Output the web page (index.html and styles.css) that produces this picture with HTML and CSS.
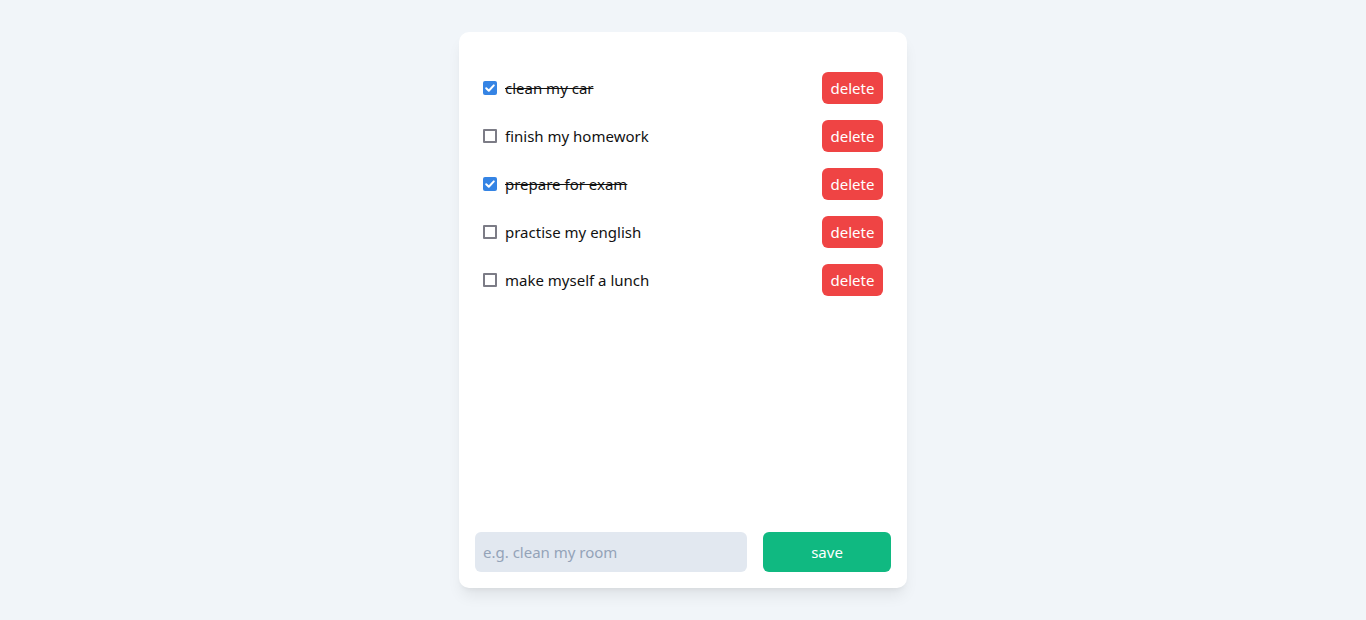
FILE: index.html
```html
<!DOCTYPE html>
<html>
<head>
<meta charset="utf-8">
<link rel="stylesheet" href="styles.css">
</head>
<body>
<div class="card">
  <ul class="list">
    <li class="item">
      <label class="label"><input type="checkbox" class="check" checked><span class="text done">clean my car</span></label>
      <button class="delete">delete</button>
    </li>
    <li class="item">
      <label class="label"><input type="checkbox" class="check"><span class="text">finish my homework</span></label>
      <button class="delete">delete</button>
    </li>
    <li class="item">
      <label class="label"><input type="checkbox" class="check" checked><span class="text done">prepare for exam</span></label>
      <button class="delete">delete</button>
    </li>
    <li class="item">
      <label class="label"><input type="checkbox" class="check"><span class="text">practise my english</span></label>
      <button class="delete">delete</button>
    </li>
    <li class="item">
      <label class="label"><input type="checkbox" class="check"><span class="text">make myself a lunch</span></label>
      <button class="delete">delete</button>
    </li>
  </ul>
  <form class="footer">
    <input class="field" type="text" placeholder="e.g. clean my room">
    <button type="button" class="save">save</button>
  </form>
</div>
</body>
</html>
```

FILE: styles.css
```css
* { box-sizing: border-box; }
html, body { margin: 0; padding: 0; }
body {
  background: #f1f5f9;
  font-family: "Noto Sans", "Open Sans", sans-serif;
  font-size: 15px;
  color: #111;
  display: flex;
  justify-content: center;
  padding-top: 32px;
  height: 620px;
}
.card {
  width: 448px;
  height: 556px;
  background: #fff;
  border-radius: 10px;
  box-shadow: 0 10px 15px -3px rgba(0,0,0,0.08), 0 4px 6px -4px rgba(0,0,0,0.08);
  padding: 16px;
  display: flex;
  flex-direction: column;
}
.list {
  list-style: none;
  margin: 0;
  padding: 24px 8px 0;
  flex: 1;
  display: flex;
  flex-direction: column;
  gap: 16px;
}
.item {
  height: 32px;
  display: flex;
  align-items: center;
  justify-content: space-between;
}
.label {
  display: flex;
  align-items: center;
  gap: 8px;
}
.check {
  appearance: none;
  -webkit-appearance: none;
  margin: 0;
  width: 14px;
  height: 14px;
  border: 2px solid #7c7c86;
  border-radius: 1px;
  background: #fff;
  display: grid;
  place-items: center;
}
.check:checked {
  border: 0;
  border-radius: 2px;
  background: #3584e4 url("data:image/svg+xml;utf8,<svg xmlns='http://www.w3.org/2000/svg' viewBox='0 0 14 14'><path d='M3.2 7.2 L5.8 9.8 L10.8 4.4' fill='none' stroke='white' stroke-width='2' stroke-linecap='round' stroke-linejoin='round'/></svg>") center/14px 14px no-repeat;
}
.text.done { text-decoration: line-through; }
.delete {
  font-family: inherit;
  font-size: 15px;
  height: 32px;
  width: 61px;
  border: 0;
  border-radius: 6px;
  background: #ef4444;
  color: #fff;
  padding: 0;
}
.footer {
  display: flex;
  gap: 16px;
  margin: 0;
}
.field {
  width: 272px;
  height: 40px;
  border: 0;
  border-radius: 6px;
  background: #e2e8f0;
  padding: 0 8px;
  font-family: inherit;
  font-size: 15px;
}
.field::placeholder { color: #94a3b8; }
.save {
  width: 128px;
  height: 40px;
  border: 0;
  border-radius: 6px;
  background: #10b981;
  color: #fff;
  font-family: inherit;
  font-size: 15px;
}
```
